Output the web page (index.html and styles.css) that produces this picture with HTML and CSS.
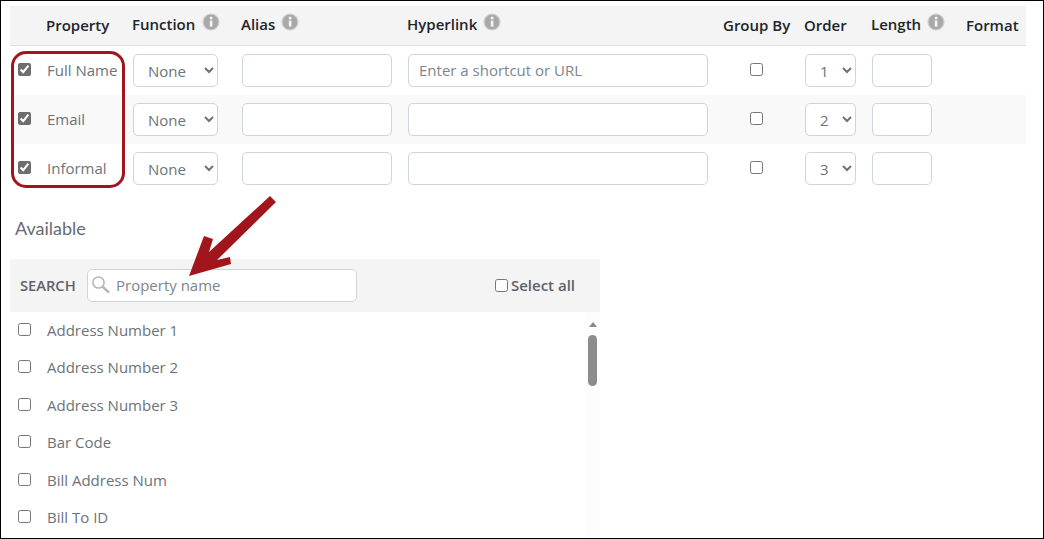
FILE: index.html
```html
<!DOCTYPE html>
<html lang="en">
<head>
<meta charset="utf-8">
<title>Properties</title>
<link rel="stylesheet" href="styles.css">
</head>
<body>
<main class="frame">
  <section class="table">
    <div class="row head">
      <div class="cell prop-head">Property</div>
      <div class="cell has-info fn-head">Function<svg class="info" viewBox="0 0 18 18"><circle cx="9" cy="9" r="8" fill="#a9a9a9" stroke="#d2d2d2" stroke-width="1.2"/><rect x="7.8" y="7.6" width="2.6" height="6" fill="#f4f4f4"/><circle cx="9.1" cy="5" r="1.5" fill="#f4f4f4"/></svg></div>
      <div class="cell has-info">Alias<svg class="info" viewBox="0 0 18 18"><circle cx="9" cy="9" r="8" fill="#a9a9a9" stroke="#d2d2d2" stroke-width="1.2"/><rect x="7.8" y="7.6" width="2.6" height="6" fill="#f4f4f4"/><circle cx="9.1" cy="5" r="1.5" fill="#f4f4f4"/></svg></div>
      <div class="cell has-info">Hyperlink<svg class="info" viewBox="0 0 18 18"><circle cx="9" cy="9" r="8" fill="#a9a9a9" stroke="#d2d2d2" stroke-width="1.2"/><rect x="7.8" y="7.6" width="2.6" height="6" fill="#f4f4f4"/><circle cx="9.1" cy="5" r="1.5" fill="#f4f4f4"/></svg></div>
      <div class="cell">Group By</div>
      <div class="cell">Order</div>
      <div class="cell has-info">Length<svg class="info" viewBox="0 0 18 18"><circle cx="9" cy="9" r="8" fill="#a9a9a9" stroke="#d2d2d2" stroke-width="1.2"/><rect x="7.8" y="7.6" width="2.6" height="6" fill="#f4f4f4"/><circle cx="9.1" cy="5" r="1.5" fill="#f4f4f4"/></svg></div>
      <div class="cell">Format</div>
    </div>
    <div class="row">
      <label class="cell pick"><input type="checkbox" checked><span>Full Name</span></label>
      <div class="cell"><select class="fn"><option>None</option></select></div>
      <div class="cell"><input class="text alias" type="text"></div>
      <div class="cell"><input class="text link" type="text" placeholder="Enter a shortcut or URL"></div>
      <div class="cell center"><input type="checkbox"></div>
      <div class="cell"><select class="ord"><option>1</option></select></div>
      <div class="cell"><input class="text len" type="text"></div>
      <div class="cell"></div>
    </div>
    <div class="row alt">
      <label class="cell pick"><input type="checkbox" checked><span>Email</span></label>
      <div class="cell"><select class="fn"><option>None</option></select></div>
      <div class="cell"><input class="text alias" type="text"></div>
      <div class="cell"><input class="text link" type="text"></div>
      <div class="cell center"><input type="checkbox"></div>
      <div class="cell"><select class="ord"><option>2</option></select></div>
      <div class="cell"><input class="text len" type="text"></div>
      <div class="cell"></div>
    </div>
    <div class="row">
      <label class="cell pick"><input type="checkbox" checked><span>Informal</span></label>
      <div class="cell"><select class="fn"><option>None</option></select></div>
      <div class="cell"><input class="text alias" type="text"></div>
      <div class="cell"><input class="text link" type="text"></div>
      <div class="cell center"><input type="checkbox"></div>
      <div class="cell"><select class="ord"><option>3</option></select></div>
      <div class="cell"><input class="text len" type="text"></div>
      <div class="cell"></div>
    </div>
  </section>

  <section class="available">
    <h2 class="title">Available</h2>
    <div class="searchbar">
      <span class="search-label">SEARCH</span>
      <div class="search-box">
        <svg class="glass" viewBox="0 0 20 20"><circle cx="7.5" cy="7.5" r="5.6" fill="none" stroke="#b4b4b4" stroke-width="1.5"/><path d="M11.8 11.8 L18 17.6" stroke="#b4b4b4" stroke-width="2.4" fill="none"/></svg>
        <input class="search-input" type="text" placeholder="Property name">
      </div>
      <label class="select-all"><input type="checkbox"><span>Select all</span></label>
    </div>
    <div class="list-wrap">
      <ul class="list">
        <li><input type="checkbox"><span>Address Number 1</span></li>
        <li><input type="checkbox"><span>Address Number 2</span></li>
        <li><input type="checkbox"><span>Address Number 3</span></li>
        <li><input type="checkbox"><span>Bar Code</span></li>
        <li><input type="checkbox"><span>Bill Address Num</span></li>
        <li><input type="checkbox"><span>Bill To ID</span></li>
      </ul>
      <div class="scroll"><span class="scroll-up"></span><span class="scroll-thumb"></span></div>
    </div>
  </section>

  <div class="callout"></div>
  <svg class="arrow" viewBox="0 0 100 90"><path d="M85 2 L91 8 L32 66 L45 63 L46 70 L4 82 L19 42 L28 45 L24 58 Z" fill="#a0161c"/></svg>
</main>
</body>
</html>
```
FILE: styles.css
```css
* { box-sizing: border-box; }
html, body { margin: 0; padding: 0; }
body { width: 1044px; height: 539px; overflow: hidden; background: #fff; font-family: "Open Sans", sans-serif; font-size: 15px; color: #6c737a; }
.frame { position: relative; width: 1044px; height: 539px; border: 1px solid #000; padding: 5px 17px 0 9px; overflow: hidden; }

.row { display: grid; grid-template-columns: 123px 108px 166px 316px 81px 67px 95px 60px; height: 49px; align-items: center; }
.row.alt { background: #f9f9f9; }
.head { height: 40px; background: #f4f4f4; border-bottom: 1px solid #dedede; color: #212529; font-weight: 600; }
.cell { display: flex; align-items: center; min-width: 0; }
.head .cell { padding-bottom: 2px; }
.head .prop-head { padding-left: 36px; }
.head .has-info { padding-bottom: 4px; }
.head .fn-head { margin-left: -1px; }
.fn-head .info { margin-left: 7px; }
.info { width: 18px; height: 18px; margin: -4px 0 0 6px; }
.pick { padding-left: 8px; gap: 16px; white-space: nowrap; margin-top: -1px; }
.center { padding-left: 27px; }
input[type="checkbox"] { width: 13px; height: 13px; margin: 0; accent-color: #6e6e6e; flex: none; }
.pick input[type="checkbox"] { margin-top: -2px; }
.center input[type="checkbox"] { margin-top: -2px; }

.cell .alias, .cell .link, .cell .ord, .cell .len { margin-left: 1px; }

select, .text { height: 33px; border: 1px solid #ced4da; border-radius: 5px; background: #fff; font: inherit; color: #6c737a; }
select { padding-left: 10px; padding-top: 1px; }
.fn { width: 85px; flex: none; }
.ord { width: 51px; flex: none; }
.text { display: block; padding: 0 10px 2px; flex: none; }
.text::placeholder, .search-input::placeholder { color: #7d858d; opacity: 1; }
.alias { width: 150px; }
.link { width: 300px; }
.len { width: 60px; }

.available { width: 590px; }
.title { margin: 21px 0 0 5px; height: 45px; padding-top: 2px; font-family: "Lato", sans-serif; font-weight: 400; font-size: 18px; line-height: 24px; color: #666c72; }
.searchbar { display: flex; align-items: center; height: 53px; background: #f4f4f4; padding: 0 25px 0 10px; }
.search-label { width: 67px; padding-bottom: 2px; font-weight: 600; font-size: 14.7px; color: #5c636a; }
.search-box { display: flex; align-items: center; width: 270px; height: 33px; padding-left: 4px; border: 1px solid #ced4da; border-radius: 5px; background: #fff; }
.glass { width: 20px; height: 20px; flex: none; margin-left: -1px; margin-right: 1px; margin-top: -1px; }
.search-input { flex: 1; min-width: 0; border: 0; outline: 0; padding: 0 0 2px 4px; background: transparent; font: inherit; color: #6c737a; }
.select-all { display: flex; align-items: center; margin-left: auto; font-weight: 600; color: #5c636a; }
.select-all span { margin-left: 3px; padding-bottom: 2px; }

.list-wrap { display: flex; height: 227px; overflow: hidden; }
.list { flex: 1; margin: -0.8px 0 0; padding: 0 0 0 8px; list-style: none; }
.list li { display: flex; align-items: center; gap: 16px; height: 37.5px; }
.list li input[type="checkbox"] { margin-top: -1px; }
.scroll { position: relative; width: 15px; height: 100%; background: #fdfdfd; display: flex; flex-direction: column; align-items: center; }
.scroll-up { width: 0; height: 0; margin-top: 10px; border-left: 4.5px solid transparent; border-right: 4.5px solid transparent; border-bottom: 5px solid #8a8a8a; }
.scroll-thumb { width: 9px; height: 51px; margin-top: 8px; border-radius: 4.5px; background: #8c8c8c; }

.callout { position: absolute; left: 10px; top: 50px; width: 114px; height: 137px; border: 3px solid #a0161c; border-radius: 15px; pointer-events: none; }
.arrow { position: absolute; left: 184px; top: 193px; width: 100px; height: 90px; pointer-events: none; }
```
